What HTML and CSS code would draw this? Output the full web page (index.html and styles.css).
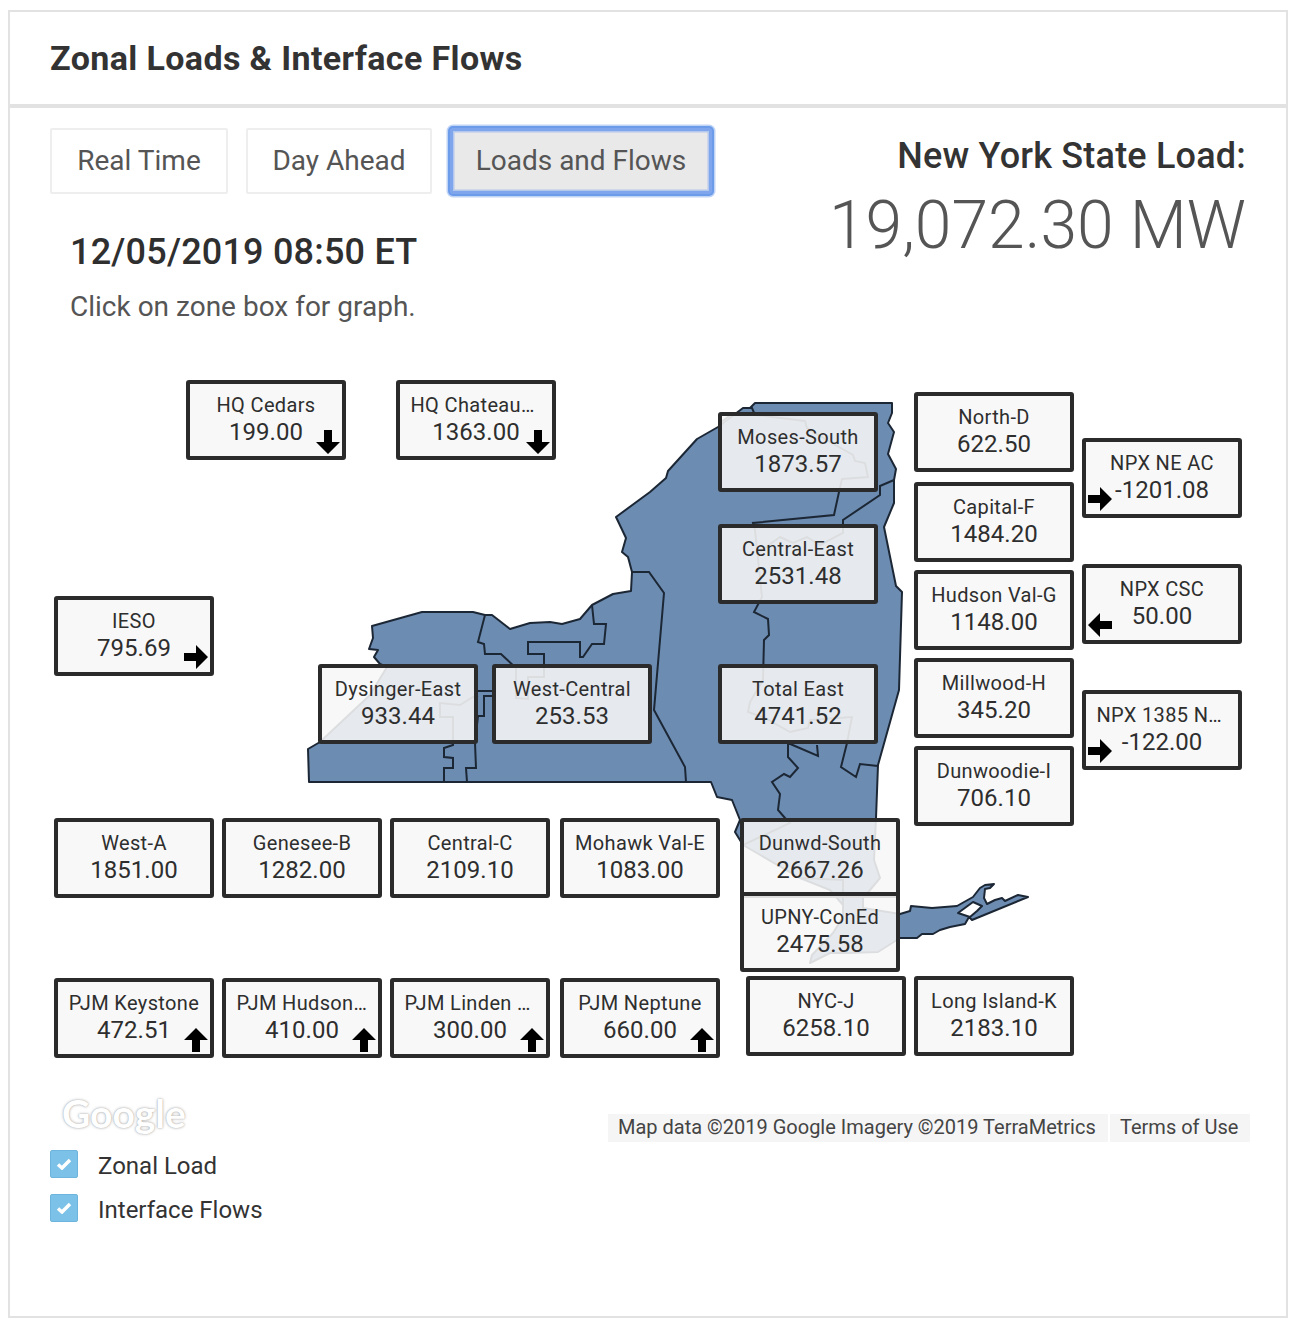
FILE: index.html
```html
<!DOCTYPE html>
<html>

<head>
	<title>
		Zonal Loads &amp; Interface Flows
	</title>

	<link rel="stylesheet" href="styles.css">

</head>

<body>
	<div class="card">
		<div class="card-header">
			<h1 class="card-title">Zonal Loads &amp; Interface Flows</h1>
		</div>

		<div class="top-row">
			<div class="top-left">
				<div class="tabs">
					<button class="tab tab-real">Real Time</button>
					<button class="tab tab-ahead">Day Ahead</button>
					<button class="tab tab-flows tab-active">Loads and Flows</button>
				</div>
				<div class="timestamp">12/05/2019 08:50 ET</div>
				<div class="hint">Click on zone box for graph.</div>
			</div>
			<div class="state-load">
				<div class="state-load-label">New York State Load:</div>
				<div class="state-load-value">19,072.30 MW</div>
			</div>
		</div>

		<div class="map">
			<svg class="state" width="1276" height="796" viewBox="10 348 1276 796">
				<path class="state-shape" fill-rule="evenodd" d="M755 403 L892 403 892 413 888 423 894 432 888 454 896 469 894 480 894 503 884 527 896 586 902 592 899 690 878 765 876 818 874 860 880 878 870 890 863 898 863 908 900 914 910 911 911 906 932 908 957 906 973 897 980 888 985 885 994 884 990 888 985 889 984 898 987 904 995 900 1002 898 1005 901 1018 895 1028 897 972 920 969 917 965 924 950 927 940 930 933 934 922 934 917 938 900 938 878 952 847 953 830 953 810 963 812 955 833 933 843 917 843 905 830 890 800 878 743 845 735 832 740 820 732 800 717 797 711 782 309 782 308 749 320 742 370 695 387 667 380 664 374 657 378 650 369 649 373 638 372 626 422 612 473 612 485 615 492 615 510 629 530 623 550 622 562 624 580 619 592 605 613 594 631 591 632 572 628 557 622 552 626 538 616 517 650 492 666 478 668 471 697 439 718 427 743 408 750 408 Z M958 913 L973 902 982 906 977 911 970 917 Z"/>
				<path class="zone-line" d="M485 615 L478 642 484 644 485 654 501 654 516 668 516 698 528 699 528 677 533 677 544 677 544 654 528 654 528 642 580 642 580 657 583 657 592 644 604 644 606 624 594 624 592 605"/>
				<path class="zone-line" d="M478 691 L493 691 M493 696 L484 696 484 716 478 716"/>
				<path class="zone-line" d="M478 696 L473 697 460 705 440 703 440 717 453 717 453 745 444 748 444 757 453 758 453 768 444 768 444 782"/>
				<path class="zone-line" d="M478 716 L475 743 476 768 466 768 467 782"/>
				<path class="zone-line" d="M632 572 L649 572 664 593 654 710 685 767 686 782"/>
				<path class="zone-line" d="M720 423 L733 413 755 415 805 421 807 428 830 442 853 455 855 461 865 463 868 477 842 479 839 492 834 515 753 523 755 530 762 597 754 612 768 619 769 635 764 640 763 680 750 702 748 712 763 717 790 732 808 728 810 720 852 717 847 743 841 767 856 777 860 764 878 766"/>
				<path class="zone-line" d="M758 553 L780 537 793 543 807 537 820 545 843 533 843 520 880 495 880 486 894 480"/>
				<path class="zone-line" d="M788 743 L818 756 817 745 M788 743 L788 757 798 768 790 777 784 774 772 782 780 794 778 810 785 818 790 823 743 845"/>
				<path class="zone-line" d="M800 878 L843 880 843 905"/>
				<path class="zone-line" d="M743 408 L752 408 755 415"/>
			</svg>

			<svg width="0" height="0" class="arrow-defs">
				<symbol id="arrow" viewBox="0 0 24 24">
					<path d="M12 0 L24 12 H16 V24 H8 V12 H0 Z"/>
				</symbol>
			</svg>

			<div class="zone hq-cedars">
				<div class="zone-name">HQ Cedars</div>
				<div class="zone-value">199.00</div>
				<svg class="arrow arrow-down"><use href="#arrow"/></svg>
			</div>
			<div class="zone hq-chateau">
				<div class="zone-name zone-name-cut">HQ Chateau…</div>
				<div class="zone-value">1363.00</div>
				<svg class="arrow arrow-down"><use href="#arrow"/></svg>
			</div>
			<div class="zone moses">
				<div class="zone-name">Moses-South</div>
				<div class="zone-value">1873.57</div>
			</div>
			<div class="zone central-east">
				<div class="zone-name">Central-East</div>
				<div class="zone-value">2531.48</div>
			</div>
			<div class="zone total-east">
				<div class="zone-name">Total East</div>
				<div class="zone-value">4741.52</div>
			</div>
			<div class="zone north-d">
				<div class="zone-name">North-D</div>
				<div class="zone-value">622.50</div>
			</div>
			<div class="zone capital-f">
				<div class="zone-name">Capital-F</div>
				<div class="zone-value">1484.20</div>
			</div>
			<div class="zone hudson-g">
				<div class="zone-name">Hudson Val-G</div>
				<div class="zone-value">1148.00</div>
			</div>
			<div class="zone millwood-h">
				<div class="zone-name">Millwood-H</div>
				<div class="zone-value">345.20</div>
			</div>
			<div class="zone dunwoodie-i">
				<div class="zone-name">Dunwoodie-I</div>
				<div class="zone-value">706.10</div>
			</div>
			<div class="zone npx-ne">
				<div class="zone-name">NPX NE AC</div>
				<div class="zone-value">-1201.08</div>
				<svg class="arrow arrow-right arrow-start"><use href="#arrow"/></svg>
			</div>
			<div class="zone npx-csc">
				<div class="zone-name">NPX CSC</div>
				<div class="zone-value">50.00</div>
				<svg class="arrow arrow-left arrow-start"><use href="#arrow"/></svg>
			</div>
			<div class="zone npx-1385">
				<div class="zone-name zone-name-cut">NPX 1385 N…</div>
				<div class="zone-value">-122.00</div>
				<svg class="arrow arrow-right arrow-start"><use href="#arrow"/></svg>
			</div>
			<div class="zone ieso">
				<div class="zone-name">IESO</div>
				<div class="zone-value">795.69</div>
				<svg class="arrow arrow-right arrow-low"><use href="#arrow"/></svg>
			</div>
			<div class="zone dysinger">
				<div class="zone-name">Dysinger-East</div>
				<div class="zone-value">933.44</div>
			</div>
			<div class="zone west-central">
				<div class="zone-name">West-Central</div>
				<div class="zone-value">253.53</div>
			</div>
			<div class="zone west-a">
				<div class="zone-name">West-A</div>
				<div class="zone-value">1851.00</div>
			</div>
			<div class="zone genesee-b">
				<div class="zone-name">Genesee-B</div>
				<div class="zone-value">1282.00</div>
			</div>
			<div class="zone central-c">
				<div class="zone-name">Central-C</div>
				<div class="zone-value">2109.10</div>
			</div>
			<div class="zone mohawk-e">
				<div class="zone-name">Mohawk Val-E</div>
				<div class="zone-value">1083.00</div>
			</div>
			<div class="zone dunwd-south">
				<div class="zone-name">Dunwd-South</div>
				<div class="zone-value">2667.26</div>
			</div>
			<div class="zone upny-coned">
				<div class="zone-name">UPNY-ConEd</div>
				<div class="zone-value">2475.58</div>
			</div>
			<div class="zone pjm-keystone">
				<div class="zone-name">PJM Keystone</div>
				<div class="zone-value">472.51</div>
				<svg class="arrow"><use href="#arrow"/></svg>
			</div>
			<div class="zone pjm-hudson">
				<div class="zone-name zone-name-cut">PJM Hudson…</div>
				<div class="zone-value">410.00</div>
				<svg class="arrow"><use href="#arrow"/></svg>
			</div>
			<div class="zone pjm-linden">
				<div class="zone-name zone-name-cut">PJM Linden …</div>
				<div class="zone-value">300.00</div>
				<svg class="arrow"><use href="#arrow"/></svg>
			</div>
			<div class="zone pjm-neptune">
				<div class="zone-name">PJM Neptune</div>
				<div class="zone-value">660.00</div>
				<svg class="arrow"><use href="#arrow"/></svg>
			</div>
			<div class="zone nyc-j">
				<div class="zone-name">NYC-J</div>
				<div class="zone-value">6258.10</div>
			</div>
			<div class="zone long-island-k">
				<div class="zone-name">Long Island-K</div>
				<div class="zone-value">2183.10</div>
			</div>

			<div class="google-logo">Google</div>
			<div class="attribution">
				<span class="attribution-item attribution-data">Map data ©2019 Google Imagery ©2019 TerraMetrics</span>
				<span class="attribution-item attribution-terms">Terms of Use</span>
			</div>
		</div>

		<div class="legend">
			<div class="legend-row">
				<span class="checkbox">
					<svg width="16" height="12" viewBox="0 0 16 12"><path d="M2 6.5 L6 10 L14 2" /></svg>
				</span>
				<span class="legend-label">Zonal Load</span>
			</div>
			<div class="legend-row">
				<span class="checkbox">
					<svg width="16" height="12" viewBox="0 0 16 12"><path d="M2 6.5 L6 10 L14 2" /></svg>
				</span>
				<span class="legend-label">Interface Flows</span>
			</div>
		</div>
	</div>
</body>

</html>
```

FILE: styles.css
```css
* {
	box-sizing: border-box;
}

body {
	margin: 0;
	background: #fff;
	font-family: Roboto, "Liberation Sans", sans-serif;
	color: #333;
}

.card {
	margin: 10px 8px 0;
	height: 1308px;
	border: 2px solid #e2e2e2;
}

.card-header {
	height: 96px;
	padding: 0 40px;
	display: flex;
	align-items: center;
	border-bottom: 4px solid #e2e2e2;
}

.card-title {
	margin: 0;
	font-size: 34px;
	font-weight: 700;
	letter-spacing: 0.38px;
	color: #333;
}

.top-row {
	height: 240px;
	padding: 20px 40px 0;
	display: flex;
	justify-content: space-between;
}

.tabs {
	display: flex;
	gap: 18px;
}

.tab {
	height: 66px;
	padding: 0 0 2px;
	border: 2px solid #eee;
	border-radius: 2px;
	background: #fff;
	font-family: Roboto, sans-serif;
	font-size: 28px;
	color: #555;
}

.tab-real {
	width: 178px;
}

.tab-ahead {
	width: 186px;
}

.tab-flows {
	width: 262px;
}

.tab-active {
	background: #e9e9e9;
	border: 3px solid #7fa6ec;
	box-shadow: 0 0 0 2px #6c9bea, 0 0 0 3.5px #c0d4f6, inset 0 0 0 1.5px #b3c8ec;
	border-radius: 3px;
}

.timestamp {
	margin: 36px 0 0 20px;
	font-size: 36px;
	line-height: 44px;
	font-weight: 500;
	letter-spacing: 0.2px;
	color: #2f2f2f;
}

.hint {
	margin: 16px 0 0 20px;
	font-size: 28px;
	line-height: 34px;
	color: #555;
}

.state-load {
	text-align: right;
}

.state-load-label {
	margin-top: 6px;
	font-size: 36px;
	line-height: 44px;
	font-weight: 500;
	letter-spacing: 0.2px;
	color: #333;
}

.state-load-value {
	margin-top: 6px;
	font-size: 66px;
	line-height: 84px;
	font-weight: 300;
	color: #555;
}

.map {
	position: relative;
	height: 796px;
}

.state {
	position: absolute;
	left: 0;
	top: 0;
}

.arrow-defs {
	position: absolute;
}

.state-shape {
	fill: #6d8cb2;
	stroke: #1c2735;
	stroke-width: 2;
	stroke-linejoin: round;
}

.zone-line {
	fill: none;
	stroke: #1c2735;
	stroke-width: 2;
}

.zone {
	position: absolute;
	width: 160px;
	height: 80px;
	padding-top: 8px;
	border: 4px solid #2b2b2b;
	border-radius: 3px;
	background: rgba(247, 247, 247, 0.88);
	text-align: center;
	color: #2e2e2e;
}

.zone-name {
	font-size: 20px;
	line-height: 26px;
	letter-spacing: 0.35px;
	white-space: nowrap;
}

.zone-name-cut {
	padding-left: 10.5px;
	text-align: left;
}

.zone-value {
	font-size: 24px;
	line-height: 28px;
}

.arrow {
	position: absolute;
	right: 2px;
	bottom: 2px;
	width: 24px;
	height: 24px;
	fill: #000;
}

.arrow-down {
	transform: rotate(180deg);
}

.arrow-right {
	transform: rotate(90deg);
}

.arrow-left {
	transform: rotate(-90deg);
}

.arrow-start {
	right: auto;
	left: 2px;
	bottom: 3px;
}

.arrow-low {
	bottom: 3px;
}

/* map boxes, measured from the top left of the map */
.hq-cedars { left: 176px; top: 32px; }
.hq-chateau { left: 386px; top: 32px; }
.moses { left: 708px; top: 64px; }
.central-east { left: 708px; top: 176px; }
.total-east { left: 708px; top: 316px; }
.north-d { left: 904px; top: 44px; }
.capital-f { left: 904px; top: 134px; }
.hudson-g { left: 904px; top: 222px; }
.millwood-h { left: 904px; top: 310px; }
.dunwoodie-i { left: 904px; top: 398px; }
.npx-ne { left: 1072px; top: 90px; }
.npx-csc { left: 1072px; top: 216px; }
.npx-1385 { left: 1072px; top: 342px; }
.ieso { left: 44px; top: 248px; }
.dysinger { left: 308px; top: 316px; }
.west-central { left: 482px; top: 316px; }
.west-a { left: 44px; top: 470px; }
.genesee-b { left: 212px; top: 470px; }
.central-c { left: 380px; top: 470px; }
.mohawk-e { left: 550px; top: 470px; }
.dunwd-south { left: 730px; top: 470px; }
.upny-coned { left: 730px; top: 544px; }
.pjm-keystone { left: 44px; top: 630px; }
.pjm-hudson { left: 212px; top: 630px; }
.pjm-linden { left: 380px; top: 630px; }
.pjm-neptune { left: 550px; top: 630px; }
.nyc-j { left: 736px; top: 628px; }
.long-island-k { left: 904px; top: 628px; }

.google-logo {
	position: absolute;
	left: 52px;
	top: 743px;
	font-family: Lato, sans-serif;
	font-size: 39px;
	line-height: 44px;
	font-weight: 700;
	color: #fff;
	text-shadow: 0 0 3px #aaa, 0 0 1px #bbb;
}

.attribution {
	position: absolute;
	left: 598px;
	top: 766px;
	display: flex;
	gap: 2px;
	font-size: 20px;
	line-height: 26px;
	color: #444;
}

.attribution-item {
	height: 28px;
	padding-left: 10px;
	background: #f5f5f5;
}

.attribution-data {
	width: 500px;
}

.attribution-terms {
	width: 140px;
}

.legend {
	margin: 6px 0 0 40px;
	display: flex;
	flex-direction: column;
	gap: 16px;
}

.legend-row {
	display: flex;
	align-items: center;
	gap: 20px;
	height: 28px;
	font-size: 24px;
	color: #333;
}

.legend-label {
	padding-top: 4px;
}

.checkbox {
	width: 28px;
	height: 28px;
	display: flex;
	align-items: center;
	justify-content: center;
	background: #7bc1e8;
	border: 1px solid #6db5de;
	border-radius: 2px;
}

.checkbox path {
	fill: none;
	stroke: #fff;
	stroke-width: 3.5;
}
```
